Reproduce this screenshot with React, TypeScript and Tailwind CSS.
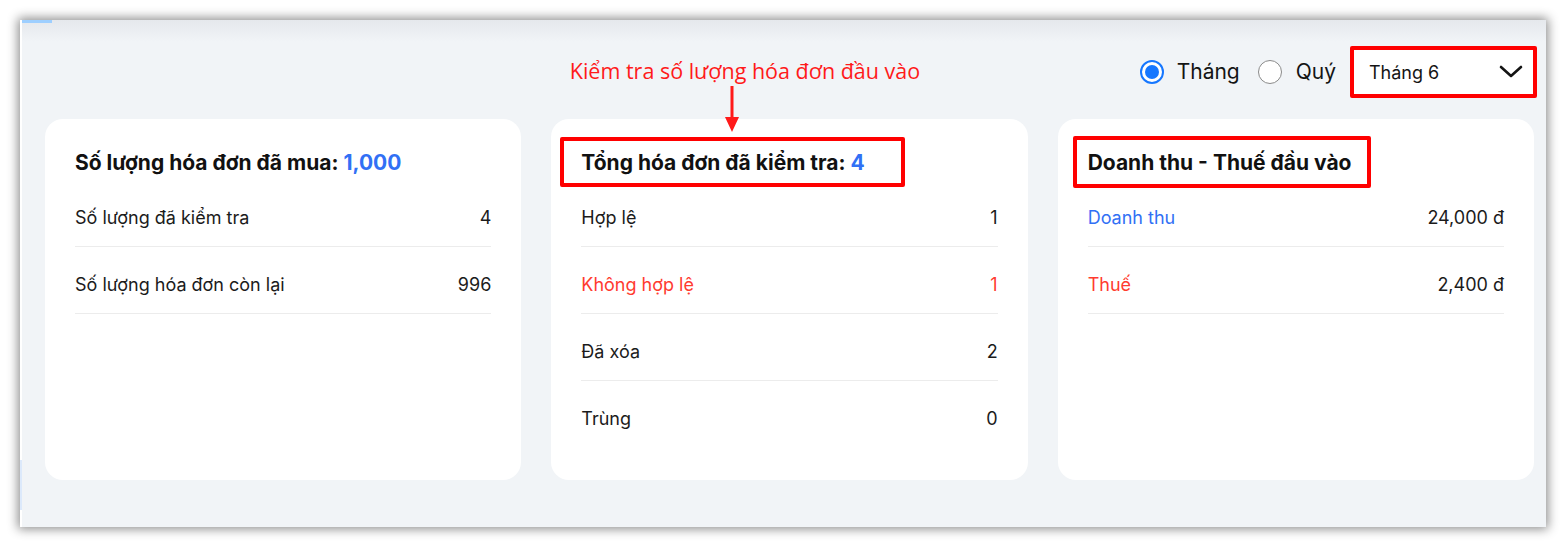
import React from "react";

type Tone = "blue" | "red";
type Row = { label: string; value: string; tone?: Tone; valueTone?: Tone };

const toneClass = (tone?: Tone) =>
  tone === "blue" ? "text-[#3170f5]" : tone === "red" ? "text-[#ff3b2f]" : "text-[#1b1b1b]";

function StatCard({
  title,
  count,
  rows,
  lastDivider = true,
  box,
}: {
  title: string;
  count?: string;
  rows: Row[];
  lastDivider?: boolean;
  box?: string;
}) {
  return (
    <div className="relative flex-1 h-[361px] bg-white rounded-[18px] px-[30px] pt-[30px]">
      {box && <div className={`absolute border-[4px] border-[#ff0000] rounded-[2px] ${box}`} />}
      <h3 className="text-[21px] leading-[28px] font-bold text-[#111] mb-[3px]">
        {title}
        {count && <span className="text-[#3170f5]"> {count}</span>}
      </h3>
      <div>
        {rows.map((r, i) => (
          <div
            key={r.label}
            className={`flex items-center justify-between pt-[26px] pb-4 text-[18px] leading-[24px] ${
              i < rows.length - 1 || lastDivider ? "border-b border-[#ececec]" : ""
            }`}
          >
            <span className={toneClass(r.tone)}>{r.label}</span>
            <span className={toneClass(r.valueTone)}>{r.value}</span>
          </div>
        ))}
      </div>
    </div>
  );
}

export default function App() {
  return (
    <div className="w-[1566px] h-[547px] bg-white p-[20px] font-['Inter','Noto_Sans',sans-serif]">
      <div className="relative h-full border-l-2 border-white bg-[linear-gradient(to_bottom,#e5e8ec_0px,#f1f4f7_22px)] shadow-[0_0_10px_2px_rgba(0,0,0,0.45)]">
        <div className="absolute left-0 top-0 w-[30px] h-[3px] bg-[#9ecfff]" />
        <div className="absolute left-[-2px] top-[440px] w-[2px] h-[50px] bg-[#dce9fb]" />

        {/* annotation */}
        <div className="absolute z-10 left-[528px] top-[36px] w-[390px] flex flex-col items-center">
          <span className="font-['Open_Sans',sans-serif] text-[21.5px] leading-[30px] text-[#ff1a1a] whitespace-nowrap">
            Kiểm tra số lượng hóa đơn đầu vào
          </span>
          <svg width="16" height="49" viewBox="0 0 16 49" className="ml-[-26px] mt-[-2px]">
            <line x1="8" y1="2" x2="8" y2="34" stroke="#ff1a1a" strokeWidth="3" />
            <polygon points="1,33 15,33 8,48" fill="#ff1a1a" />
          </svg>
        </div>

        <div className="flex items-center justify-end pt-[26px] pr-[9px] h-[52px] box-content">
          <label className="flex items-center gap-[13px] text-[21px] text-[#141414]">
            <span className="w-[24px] h-[24px] rounded-full border-2 border-[#1677ff] bg-white flex items-center justify-center">
              <span className="w-[14px] h-[14px] rounded-full bg-[#1677ff]" />
            </span>
            Tháng
          </label>
          <label className="flex items-center gap-[14px] text-[21px] text-[#141414] ml-[18px]">
            <span className="w-[24px] h-[24px] rounded-full border-[1.5px] border-[#8a8a8a] bg-white" />
            Quý
          </label>
          <div className="ml-[14px] w-[187px] h-[52px] border-[4px] border-[#ff0000] rounded-[2px] bg-white flex items-center justify-between pl-[15px] pr-[10px]">
            <span className="text-[18px] text-[#141414]">Tháng 6</span>
            <svg width="24" height="14" viewBox="0 0 24 14">
              <path d="M2 2 L12 11 L22 2" fill="none" stroke="#141414" strokeWidth="2.6" strokeLinecap="round" strokeLinejoin="round" />
            </svg>
          </div>
        </div>

        <div className="flex gap-[30px] pl-[23px] pr-[12px] pt-[21px]">
          <StatCard
            title="Số lượng hóa đơn đã mua:"
            count="1,000"
            rows={[
              { label: "Số lượng đã kiểm tra", value: "4" },
              { label: "Số lượng hóa đơn còn lại", value: "996" },
            ]}
          />
          <StatCard
            title="Tổng hóa đơn đã kiểm tra:"
            count="4"
            lastDivider={false}
            box="left-[9px] top-[18px] w-[345px] h-[50px]"
            rows={[
              { label: "Hợp lệ", value: "1" },
              { label: "Không hợp lệ", value: "1", tone: "red", valueTone: "red" },
              { label: "Đã xóa", value: "2" },
              { label: "Trùng", value: "0" },
            ]}
          />
          <StatCard
            title="Doanh thu - Thuế đầu vào"
            box="left-[15px] top-[17px] w-[298px] h-[52px]"
            rows={[
              { label: "Doanh thu", value: "24,000 đ", tone: "blue" },
              { label: "Thuế", value: "2,400 đ", tone: "red" },
            ]}
          />
        </div>
      </div>
    </div>
  );
}
